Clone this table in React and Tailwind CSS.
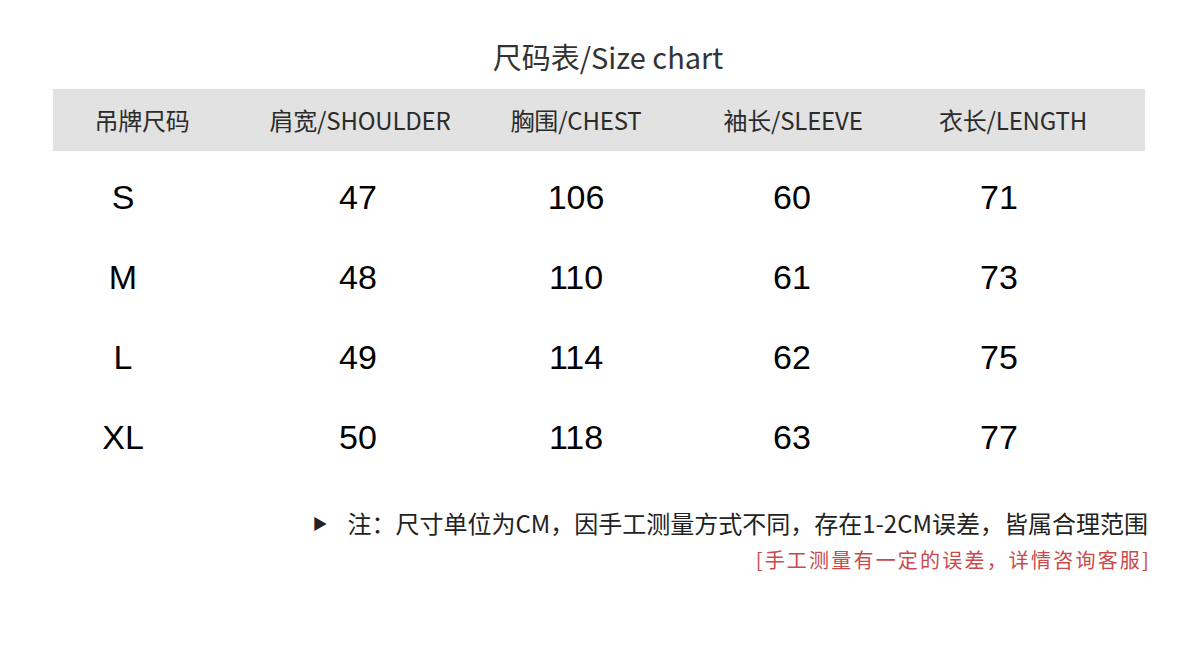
import React from 'react';

const cjk = { fontFamily: '"Noto Sans CJK SC", "Noto Sans", sans-serif' };
const arial = { fontFamily: '"Liberation Sans", Arial, sans-serif' };

const headers = ['吊牌尺码', '肩宽/SHOULDER', '胸围/CHEST', '袖长/SLEEVE', '衣长/LENGTH'];

const rows = [
  ['S', '47', '106', '60', '71'],
  ['M', '48', '110', '61', '73'],
  ['L', '49', '114', '62', '75'],
  ['XL', '50', '118', '63', '77'],
];

export default function App() {
  return (
    <div className="w-[1200px] h-[650px] bg-white overflow-hidden relative">
      {/* Title */}
      <div className="pt-[36px] flex justify-center pl-[16px]">
        <h1 className="text-[29px] leading-[40px] text-[#333]" style={cjk}>
          尺码表/Size chart
        </h1>
      </div>

      {/* Header bar */}
      <div className="mt-[13px] ml-[53px] w-[1092px] h-[62px] bg-[#e2e2e2] grid grid-cols-[178px_258px_174px_260px_180px_1fr] items-center">
        {headers.map((h) => (
          <div key={h} className="text-center text-[24px] text-[#2b2b2b] tracking-[-0.2px]" style={cjk}>
            {h}
          </div>
        ))}
      </div>

      {/* Data rows */}
      <div className="ml-[53px] w-[1092px] pt-[6px]">
        {rows.map((r) => (
          <div
            key={r[0]}
            className="h-[80px] grid grid-cols-[140px_330px_106px_326px_88px_1fr] items-center text-[34px] text-black"
            style={arial}
          >
            {r.slice(0, 5).map((v, i) => (
              <div key={i} className="text-center">
                {v}
              </div>
            ))}
          </div>
        ))}
      </div>

      {/* Notes */}
      <div className="mt-[30px] pr-[52px] flex flex-col items-end" style={cjk}>
        <div className="text-[24px] leading-[32px] text-[#222] flex items-center">
          <span className="text-[15px] mr-[20px]">▶</span>
          注：尺寸单位为CM，因手工测量方式不同，存在1-2CM误差，皆属合理范围
        </div>
        <div className="mt-[7px] -mr-[3px] text-[20px] leading-[28px] tracking-[2.2px] text-[#c94a4a]">
          [手工测量有一定的误差，详情咨询客服]
        </div>
      </div>
    </div>
  );
}
